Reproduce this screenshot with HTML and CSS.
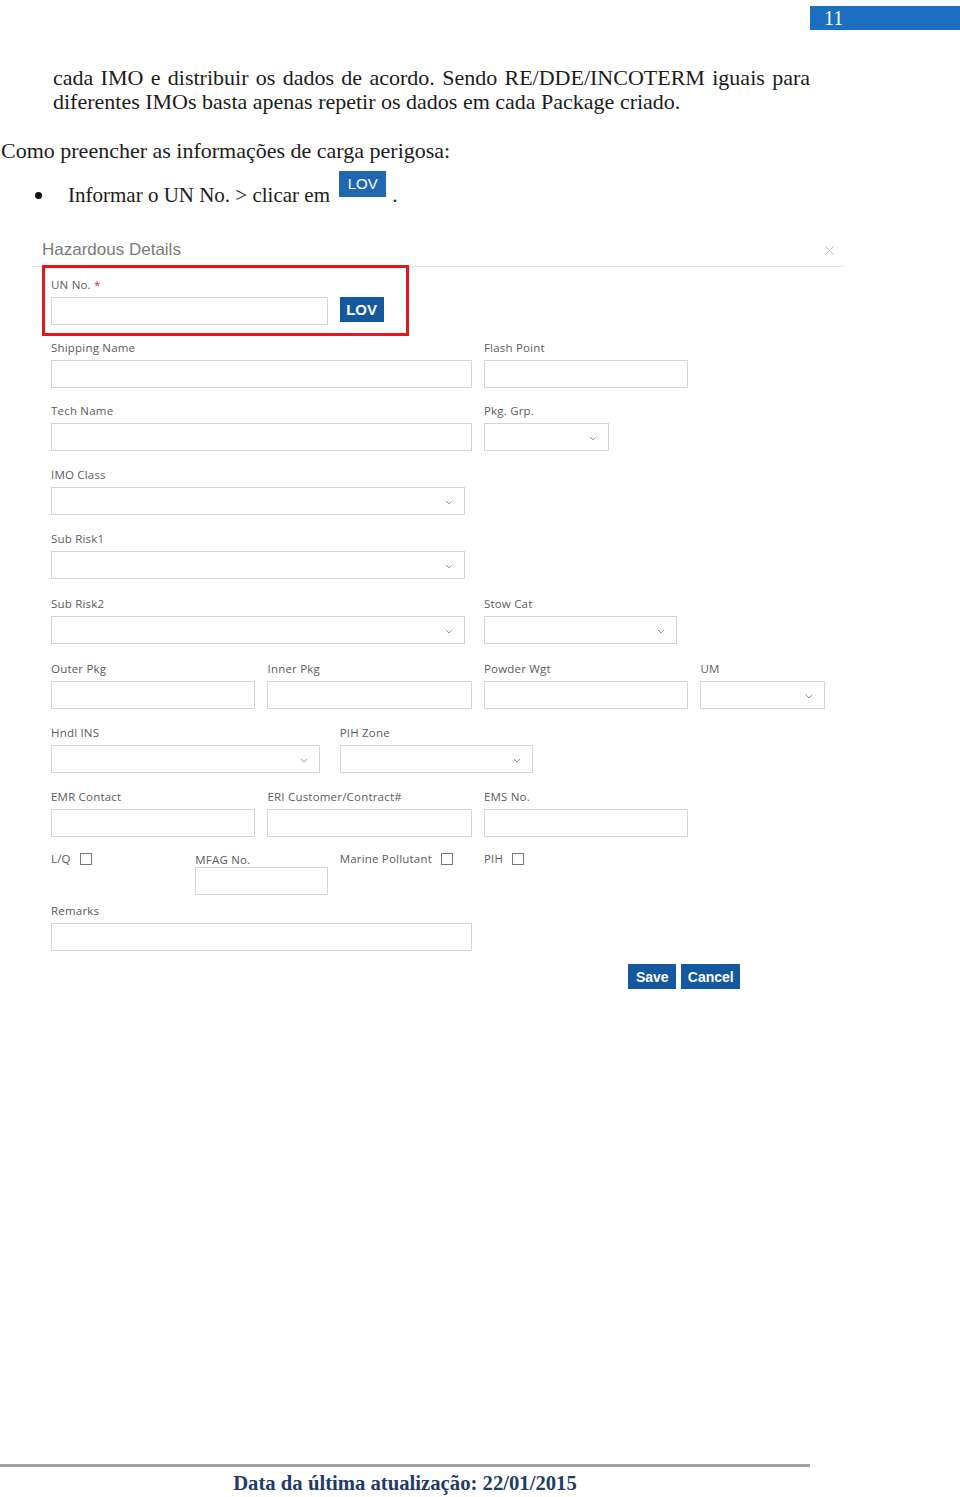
FILE: index.html
```html
<!DOCTYPE html>
<html lang="pt">
<head>
<meta charset="utf-8">
<title>Hazardous Details</title>
<link rel="stylesheet" href="styles.css">
</head>
<body>
<div class="page">
  <header class="top"><div class="pagenum">11</div></header>

  <p class="para"><span class="l1">cada IMO e distribuir os dados de acordo. Sendo RE/DDE/INCOTERM iguais para</span><span class="l2">diferentes IMOs basta apenas repetir os dados em cada Package criado.</span></p>

  <p class="lead">Como preencher as informações de carga perigosa:</p>

  <p class="bullet"><span class="dot"></span>Informar o UN No. &gt; clicar em <span class="lov-img">LOV</span>.</p>

  <section class="dialog">
    <div class="dlg-head">
      <span class="dlg-title">Hazardous Details</span>
      <svg class="close" width="9" height="9" viewBox="0 0 9 9"><path d="M0.5 0.5L8.5 8.5M8.5 0.5L0.5 8.5" stroke="#b8b8b8" stroke-width="1"/></svg>
    </div>
    <div class="dlg-body">
      <div class="highlight"></div>

      <div class="row m15">
        <div class="field s4"><label>UN No. <span class="req">*</span></label><div class="inp"></div></div>
        <button class="btn lov">LOV</button>
      </div>

      <div class="row m15">
        <div class="field s6"><label>Shipping Name</label><div class="inp"></div></div>
        <div class="field s3"><label>Flash Point</label><div class="inp"></div></div>
      </div>

      <div class="row">
        <div class="field s6"><label>Tech Name</label><div class="inp"></div></div>
        <div class="field s3"><label>Pkg. Grp.</label><div class="sel w125"><svg width="8" height="5" viewBox="0 0 8 5"><path d="M0.8 0.8L4 4L7.2 0.8" fill="none" stroke="#9a9a9a" stroke-width="1"/></svg></div></div>
      </div>

      <div class="row">
        <div class="field s6"><label>IMO Class</label><div class="sel w414"><svg width="8" height="5" viewBox="0 0 8 5"><path d="M0.8 0.8L4 4L7.2 0.8" fill="none" stroke="#9a9a9a" stroke-width="1"/></svg></div></div>
      </div>

      <div class="row m17">
        <div class="field s6"><label>Sub Risk1</label><div class="sel w414"><svg width="8" height="5" viewBox="0 0 8 5"><path d="M0.8 0.8L4 4L7.2 0.8" fill="none" stroke="#9a9a9a" stroke-width="1"/></svg></div></div>
      </div>

      <div class="row m17">
        <div class="field s6"><label>Sub Risk2</label><div class="sel w414"><svg width="8" height="5" viewBox="0 0 8 5"><path d="M0.8 0.8L4 4L7.2 0.8" fill="none" stroke="#9a9a9a" stroke-width="1"/></svg></div></div>
        <div class="field s3"><label>Stow Cat</label><div class="sel w193"><svg width="8" height="5" viewBox="0 0 8 5"><path d="M0.8 0.8L4 4L7.2 0.8" fill="none" stroke="#9a9a9a" stroke-width="1"/></svg></div></div>
      </div>

      <div class="row">
        <div class="field s3"><label>Outer Pkg</label><div class="inp"></div></div>
        <div class="field s3"><label>Inner Pkg</label><div class="inp"></div></div>
        <div class="field s3"><label>Powder Wgt</label><div class="inp"></div></div>
        <div class="field s3"><label>UM</label><div class="sel w125"><svg width="8" height="5" viewBox="0 0 8 5"><path d="M0.8 0.8L4 4L7.2 0.8" fill="none" stroke="#9a9a9a" stroke-width="1"/></svg></div></div>
      </div>

      <div class="row">
        <div class="field s4"><label>Hndl INS</label><div class="sel w269"><svg width="8" height="5" viewBox="0 0 8 5"><path d="M0.8 0.8L4 4L7.2 0.8" fill="none" stroke="#9a9a9a" stroke-width="1"/></svg></div></div>
        <div class="field s3"><label>PIH Zone</label><div class="sel w193"><svg width="8" height="5" viewBox="0 0 8 5"><path d="M0.8 0.8L4 4L7.2 0.8" fill="none" stroke="#9a9a9a" stroke-width="1"/></svg></div></div>
      </div>

      <div class="row m14">
        <div class="field s3"><label>EMR Contact</label><div class="inp"></div></div>
        <div class="field s3"><label>ERI Customer/Contract#</label><div class="inp"></div></div>
        <div class="field s3"><label>EMS No.</label><div class="inp"></div></div>
      </div>

      <div class="row checks">
        <div class="chk s2"><span>L/Q</span><span class="box"></span></div>
        <div class="field s2 mfag"><label>MFAG No.</label><div class="inp"></div></div>
        <div class="chk s2"><span>Marine Pollutant</span><span class="box"></span></div>
        <div class="chk s2"><span>PIH</span><span class="box"></span></div>
      </div>

      <div class="row">
        <div class="field s6"><label>Remarks</label><div class="inp"></div></div>
      </div>

      <div class="row actions">
        <div class="btns"><button class="btn save">Save</button><button class="btn cancel">Cancel</button></div>
      </div>
    </div>
  </section>

  <footer class="foot">Data da última atualização: 22/01/2015</footer>
</div>
</body>
</html>
```

FILE: styles.css
```css
* { box-sizing: border-box; }
body { margin: 0; background: #fff; font-family: "Liberation Serif", serif; color: #1c1c1c; }
.page { width: 960px; height: 1497px; display: flex; flex-direction: column; }

.top { display: flex; justify-content: flex-end; padding-top: 6px; }
.pagenum { width: 150px; height: 24px; background: #1b6ec0; color: #fff; font-size: 20px; line-height: 24px; padding-left: 14px; }

.para { margin: 36px 150px 0 53px; font-size: 22px; line-height: 24px; }
.para .l1 { display: block; text-align: justify; text-align-last: justify; }
.para .l2 { display: block; }

.lead { margin: 25px 0 0 1px; font-size: 22px; line-height: 24px; }

.bullet { margin: 8px 0 0 35px; height: 36px; font-size: 21px; line-height: 24px; }
.dot { display: inline-block; width: 7px; height: 7px; border-radius: 50%; background: #111; margin-right: 26px; vertical-align: 3px; }
.lov-img { display: inline-block; overflow: hidden; width: 47px; height: 26px; margin: 0 6px 0 4px; background: #2067b1; color: #fff; font-family: "Liberation Sans", sans-serif; font-size: 15px; line-height: 26px; text-align: center; vertical-align: 5px; }

.dialog { position: relative; margin: 26px 0 0 33px; width: 811px; }
.dlg-head { height: 34px; border-bottom: 1px solid #e2e2e2; display: flex; align-items: center; justify-content: space-between; padding: 0 10px 0 9px; }
.dlg-title { font-family: "Liberation Sans", Arial, sans-serif; font-size: 17px; color: #7a7a7a; }
.close { margin-top: 1px; }

.dlg-body { padding: 10px 0 0 18px; }
.highlight { position: absolute; left: 9px; top: 32px; width: 367px; height: 71px; border: 3px solid #e8141b; pointer-events: none; }

.row { display: grid; grid-template-columns: repeat(12, 60.17px); column-gap: 12px; width: 854px; align-items: start; margin-bottom: 16px; }
.m14 { margin-bottom: 14px; }
.m15 { margin-bottom: 15px; }
.m17 { margin-bottom: 17px; }
.s2 { grid-column: span 2; }
.s3 { grid-column: span 3; }
.s4 { grid-column: span 4; }
.s6 { grid-column: span 6; }

.field label { display: block; font-family: "Open Sans", sans-serif; font-size: 11.5px; letter-spacing: 0.2px; line-height: 15px; color: #5c5c5c; margin-bottom: 5px; white-space: nowrap; }
.req { color: #d9262c; }
.inp { height: 28px; border: 1px solid #d4d4d4; background: #fff; }
.sel { height: 28px; border: 1px solid #d4d4d4; background: #fff; display: flex; justify-content: flex-end; align-items: flex-end; padding: 0 11px 9px 0; }
.w125 { width: 125px; }
.w193 { width: 193px; }
.w269 { width: 269px; }
.w414 { width: 414px; }

.btn { border: 0; margin: 0; padding: 0; color: #fff; background: #14589f; font-family: "Liberation Sans", Arial, sans-serif; font-weight: bold; font-size: 14px; cursor: pointer; }
.lov { grid-column: 5 / span 1; width: 44px; height: 25px; margin-top: 20px; font-size: 15px; }

.checks { margin-bottom: 8px; }
.chk { display: flex; align-items: center; gap: 9px; font-family: "Open Sans", sans-serif; font-size: 11.5px; letter-spacing: 0.2px; line-height: 15px; color: #5c5c5c; }
.box { width: 12px; height: 12px; border: 1px solid #777; background: #fff; }
.mfag label { margin-top: 1px; margin-bottom: 0; }

.actions { margin-bottom: 0; margin-top: -3px; }
.btns { grid-column: 9 / span 4; display: flex; gap: 5px; }
.save { width: 48px; height: 25px; }
.cancel { width: 59px; height: 25px; }

.foot { margin-top: auto; width: 810px; border-top: 3px solid #a3a3a3; padding-top: 4px; height: 33px; text-align: center; font-weight: bold; font-size: 20.7px; line-height: 24px; color: #1f3c66; }
```
